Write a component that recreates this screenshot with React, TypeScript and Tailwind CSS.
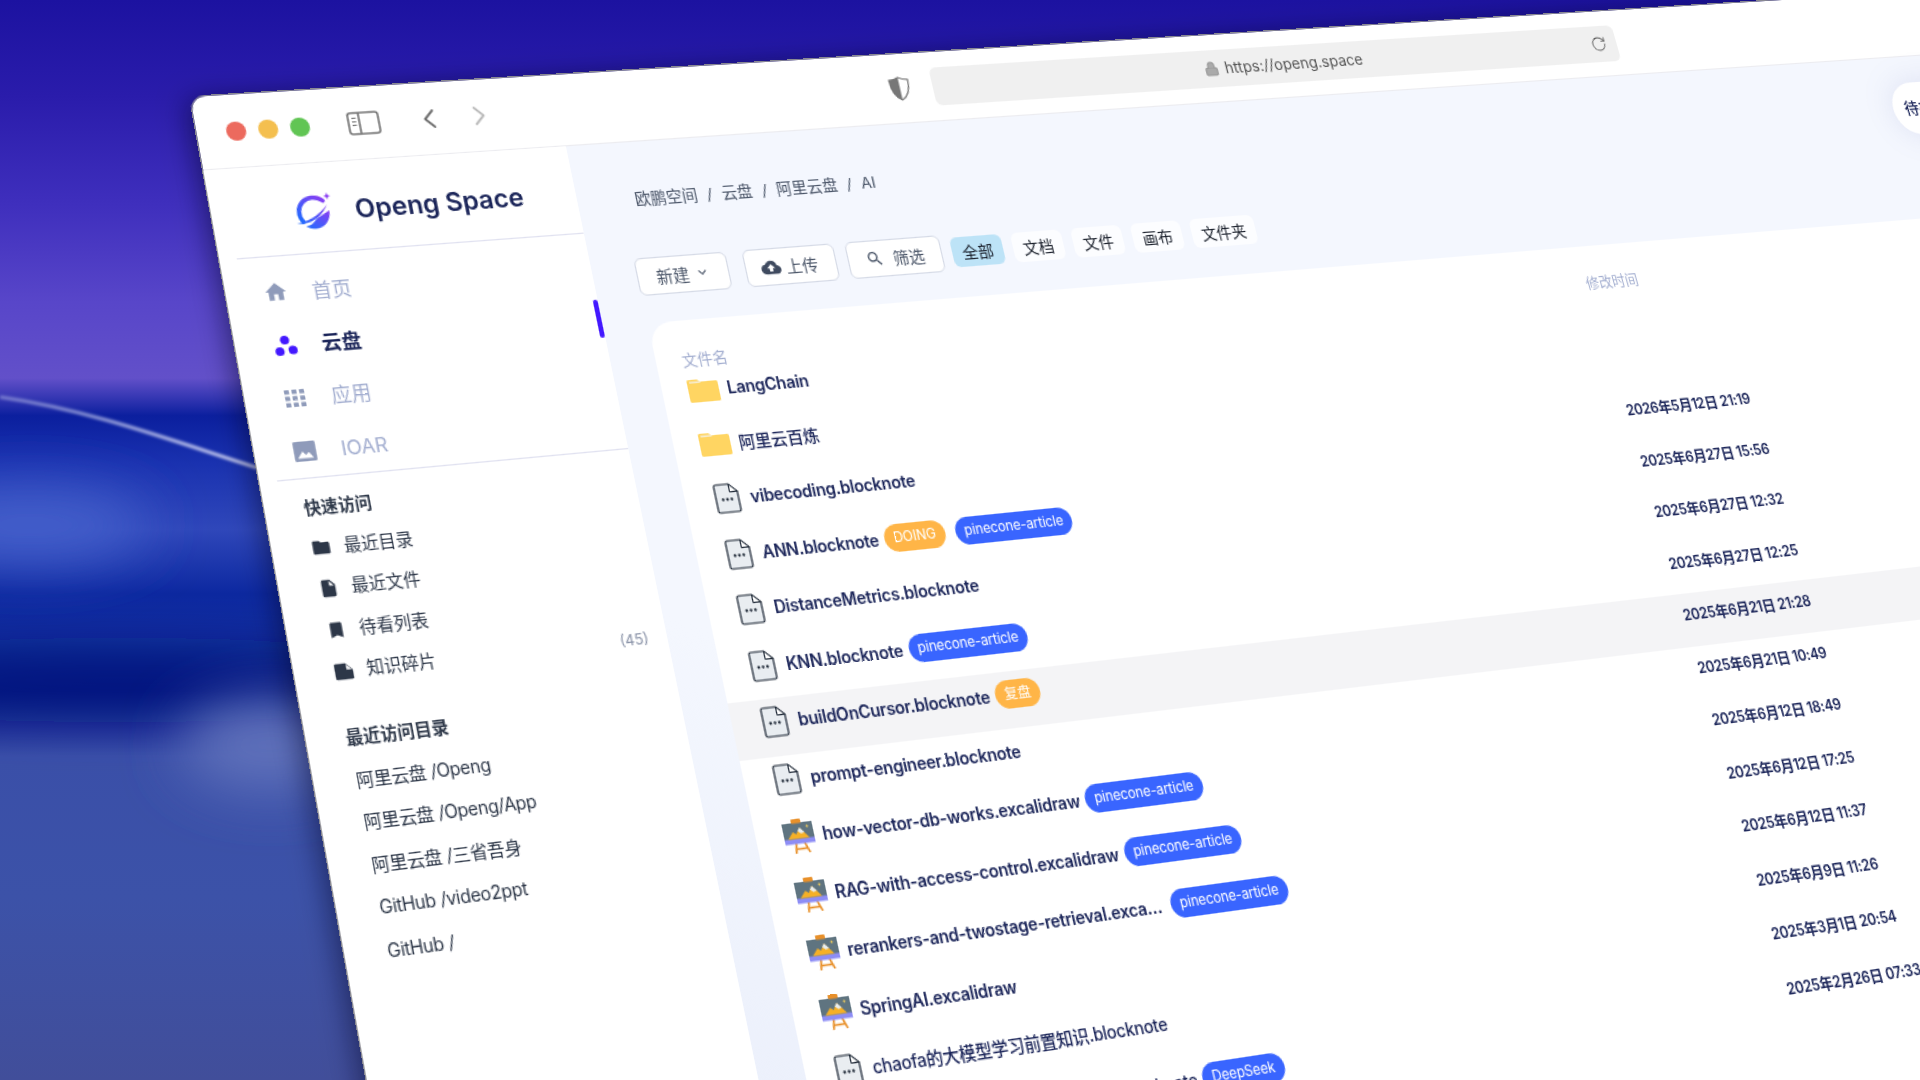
import { FC, ReactNode } from "react";
import { ChevronLeft, ChevronRight, Lock, RotateCw } from "lucide-react";
import {
  MdBookmark,
  MdCloudUpload,
  MdExpandMore,
  MdFolder,
  MdHome,
  MdInsertDriveFile,
  MdSearch,
} from "react-icons/md";

// the window is laid out flat, then pinned on four points measured in the screenshot
const getPerspective = () => {
  const S = 300;
  const R = 530;
  const [x0, y0] = [190, 97];
  const [x1, y1] = [551, 75];
  const [x2, y2] = [682, 710];
  const [x3, y3] = [308, 753];
  const dx1 = x1 - x2;
  const dx2 = x3 - x2;
  const sx = x0 - x1 + x2 - x3;
  const dy1 = y1 - y2;
  const dy2 = y3 - y2;
  const sy = y0 - y1 + y2 - y3;
  const den = dx1 * dy2 - dx2 * dy1;
  const g = (sx * dy2 - dx2 * sy) / den;
  const h = (dx1 * sy - sx * dy1) / den;
  const a = x1 - x0 + g * x1;
  const b = x3 - x0 + h * x3;
  const d = y1 - y0 + g * y1;
  const e = y3 - y0 + h * y3;
  return `matrix3d(${a / S},${d / S},0,${g / S},${b / R},${e / R},0,${h / R},0,0,1,0,${x0},${y0},0,1)`;
};

const Wallpaper: FC = () => (
  <svg className="absolute inset-0 w-full h-full" viewBox="0 0 1920 1080" preserveAspectRatio="none">
    <defs>
      <linearGradient id="wall" x1="0" y1="0" x2="0" y2="1">
        <stop offset="0" stopColor="#1c12a0" />
        <stop offset="0.09" stopColor="#2a1cab" />
        <stop offset="0.19" stopColor="#3f2fbd" />
        <stop offset="0.28" stopColor="#5846c9" />
        <stop offset="0.35" stopColor="#6250c9" />
        <stop offset="0.385" stopColor="#0b1f9e" />
        <stop offset="0.43" stopColor="#1a32b0" />
        <stop offset="0.49" stopColor="#2f47ba" />
        <stop offset="0.55" stopColor="#0c28a0" />
        <stop offset="0.59" stopColor="#12309f" />
        <stop offset="0.64" stopColor="#07198a" />
        <stop offset="0.7" stopColor="#3a4fa8" />
        <stop offset="0.83" stopColor="#3c52a8" />
        <stop offset="1" stopColor="#414e9a" />
      </linearGradient>
      <linearGradient id="streak" x1="0" y1="0" x2="1" y2="0">
        <stop offset="0" stopColor="#c6cbf0" stopOpacity="0.45" />
        <stop offset="1" stopColor="#d0d4f4" />
      </linearGradient>
      <filter id="soft" x="-100%" y="-200%" width="300%" height="500%">
        <feGaussianBlur stdDeviation="28" />
      </filter>
      <filter id="thin" x="-5%" y="-50%" width="110%" height="200%">
        <feGaussianBlur stdDeviation="1.4" />
      </filter>
    </defs>
    <rect width="1920" height="1080" fill="url(#wall)" />
    <ellipse cx="30" cy="525" rx="120" ry="36" fill="#4460cc" filter="url(#soft)" />
    <ellipse cx="120" cy="680" rx="300" ry="24" fill="#04127a" filter="url(#soft)" />
    <ellipse cx="270" cy="745" rx="90" ry="45" fill="#6072bb" filter="url(#soft)" />
    <path d="M0 397C90 410 170 440 258 468" stroke="url(#streak)" strokeWidth="3.5" fill="none" filter="url(#thin)" />
  </svg>
);

const Logo: FC = () => (
  <svg width="34" height="34" viewBox="0 0 34 34" fill="none">
    <defs>
      <linearGradient id="logo" x1="0" y1="1" x2="1" y2="0">
        <stop offset="0" stopColor="#1d6dff" />
        <stop offset="1" stopColor="#8a3df2" />
      </linearGradient>
    </defs>
    <path d="M25 7.5A12.5 12.5 0 0 0 6.5 24" stroke="url(#logo)" strokeWidth="3.6" strokeLinecap="round" />
    <path d="M1 25C8 25 20 20 28 11C23 20 12 28 1 25Z" fill="url(#logo)" />
    <path d="M18 22L29 16C29 24 23 31 15 30.5C12 30.3 10 29.5 8 28C12 28 15 25 18 22Z" fill="url(#logo)" />
    <path d="M29 1L29.8 3.2L32 4L29.8 4.8L29 7L28.2 4.8L26 4L28.2 3.2Z" fill="#8a3df2" />
  </svg>
);

const DotsIcon: FC = () => (
  <svg width="20" height="20" viewBox="0 0 20 20" fill="#4318ff">
    <circle cx="10" cy="5.5" r="3.6" />
    <circle cx="4.8" cy="14.5" r="3.6" />
    <circle cx="15.4" cy="14" r="3.6" />
  </svg>
);

const GridIcon: FC = () => (
  <svg width="16" height="16" viewBox="0 0 18 18" fill="#8f9bba">
    <rect x="0" y="1" width="4.4" height="4.2" rx=".6" />
    <rect x="6.8" y="1" width="4.4" height="4.2" rx=".6" />
    <rect x="13.6" y="1" width="4.4" height="4.2" rx=".6" />
    <rect x="0" y="6.9" width="4.4" height="4.2" rx=".6" />
    <rect x="6.8" y="6.9" width="4.4" height="4.2" rx=".6" />
    <rect x="13.6" y="6.9" width="4.4" height="4.2" rx=".6" />
    <rect x="0" y="12.8" width="4.4" height="4.2" rx=".6" />
    <rect x="6.8" y="12.8" width="4.4" height="4.2" rx=".6" />
    <rect x="13.6" y="12.8" width="4.4" height="4.2" rx=".6" />
  </svg>
);

const PhotoIcon: FC = () => (
  <svg width="18" height="16" viewBox="0 0 21 19">
    <rect x="0" y="0" width="21" height="19" rx="1.5" fill="#8f9bba" />
    <path d="M3 16L8 9.5L11 13L14 10.5L18 16Z" fill="#fff" />
  </svg>
);

const SnippetIcon: FC = () => (
  <svg width="18" height="16" viewBox="0 0 18 16">
    <path d="M1 2.5C1 1.7 1.7 1 2.5 1H11L17 7V13.5C17 14.3 16.3 15 15.5 15H2.5C1.7 15 1 14.3 1 13.5Z" fill="#2d3748" />
    <path d="M11.5 2L16 6.5H11.5Z" fill="#fff" />
  </svg>
);

const SidebarIcon: FC = () => (
  <svg width="27" height="20" viewBox="0 0 27 20" fill="none" stroke="#777" strokeWidth="1.6">
    <rect x="1" y="1" width="25" height="18" rx="2.5" />
    <path d="M10 1V19" />
    <path d="M4 5.5H7.5M4 8.5H7.5M4 11.5H7.5" strokeWidth="1.2" />
  </svg>
);

const ShieldIcon: FC = () => (
  <svg width="19" height="22" viewBox="0 0 19 22">
    <path d="M9.5 1C6.5 2.6 4 3 1 3.2C1 12 3.4 18 9.5 21C15.6 18 18 12 18 3.2C15 3 12.5 2.6 9.5 1Z" fill="#fff" stroke="#777" strokeWidth="1.2" />
    <path d="M9.5 1C6.5 2.6 4 3 1 3.2C1 12 3.4 18 9.5 21Z" fill="#777" />
  </svg>
);

const FolderIcon: FC = () => (
  <svg width="26" height="20" viewBox="0 0 26 20">
    <path d="M0 2.5C0 1.5 .8 1 1.5 1H9L11 3H24.5C25.4 3 26 3.7 26 4.5V18.5C26 19.4 25.4 20 24.5 20H1.5C.7 20 0 19.4 0 18.5Z" fill="#ffd562" />
    <path d="M2 2.5H10.5L12 4H2Z" fill="#f6ecd0" />
  </svg>
);

const DocIcon: FC = () => (
  <svg width="21" height="25" viewBox="0 0 21 25">
    <path d="M2.5 1H13.5L20 7.5V22.5C20 23.3 19.3 24 18.5 24H2.5C1.7 24 1 23.3 1 22.5V2.5C1 1.7 1.7 1 2.5 1Z" fill="#e9edf1" stroke="#1f2937" strokeWidth="1.2" />
    <path d="M13.5 1V7.5H20Z" fill="#fff" stroke="#1f2937" strokeWidth="1" />
    <circle cx="6.8" cy="13.5" r="1.15" fill="#1f2937" />
    <circle cx="10.5" cy="13.5" r="1.15" fill="#1f2937" />
    <circle cx="14.2" cy="13.5" r="1.15" fill="#1f2937" />
  </svg>
);

const EaselIcon: FC = () => (
  <svg width="25" height="27" viewBox="0 0 25 27">
    <path d="M9 19L7.5 27M16 19L19 27M8 23.5H18" stroke="#e8902a" strokeWidth="1.6" fill="none" />
    <rect x="0" y="3" width="25" height="16" fill="#5f7480" />
    <path d="M0 19.5V15.5H25V19.5Z" fill="#8d8df5" />
    <path d="M3 15.5L8 10L10.5 12L14 7L21 15.5Z" fill="#f5b027" />
    <path d="M12 9.5L14 7L17.5 11L14.5 11.8Z" fill="#e9eef2" />
    <rect x="8" y="0" width="8" height="3.5" rx="1" fill="#e8902a" />
    <circle cx="20.5" cy="6.5" r=".9" fill="#f8d25a" />
  </svg>
);

const Pill: FC<{ color: string; children: ReactNode }> = ({ color, children }) => (
  <span className={`flex items-center h-[23px] px-[8px] rounded-full text-[11.5px] tracking-[-0.1px] text-white whitespace-nowrap ${color}`}>
    {children}
  </span>
);

const blue = "bg-[#3965ff]";
const orange = "bg-[#ffb547]";

type Row = {
  name: string;
  icon: "folder" | "doc" | "easel";
  date?: string;
  tags?: [string, string][];
  active?: boolean;
};

const rows: Row[] = [
  { name: "LangChain", icon: "folder" },
  { name: "阿里云百炼", icon: "folder" },
  { name: "vibecoding.blocknote", icon: "doc", date: "2026年5月12日 21:19" },
  { name: "ANN.blocknote", icon: "doc", date: "2025年6月27日 15:56", tags: [["DOING", orange], ["pinecone-article", blue]] },
  { name: "DistanceMetrics.blocknote", icon: "doc", date: "2025年6月27日 12:32" },
  { name: "KNN.blocknote", icon: "doc", date: "2025年6月27日 12:25", tags: [["pinecone-article", blue]] },
  { name: "buildOnCursor.blocknote", icon: "doc", date: "2025年6月21日 21:28", tags: [["复盘", orange]], active: true },
  { name: "prompt-engineer.blocknote", icon: "doc", date: "2025年6月21日 10:49" },
  { name: "how-vector-db-works.excalidraw", icon: "easel", date: "2025年6月12日 18:49", tags: [["pinecone-article", blue]] },
  { name: "RAG-with-access-control.excalidraw", icon: "easel", date: "2025年6月12日 17:25", tags: [["pinecone-article", blue]] },
  { name: "rerankers-and-twostage-retrieval.excalidraw", icon: "easel", date: "2025年6月12日 11:37", tags: [["pinecone-article", blue]] },
  { name: "SpringAI.excalidraw", icon: "easel", date: "2025年6月9日 11:26" },
  { name: "chaofa的大模型学习前置知识.blocknote", icon: "doc", date: "2025年3月1日 20:54" },
  { name: "DeepSeek-R1技术报告论文解读.blocknote", icon: "doc", date: "2025年2月26日 07:33", tags: [["DeepSeek", blue]] },
];

const NavItem: FC<{ icon: ReactNode; label: string; active?: boolean }> = ({ icon, label, active }) => (
  <div className={`relative flex items-center h-[43px] pl-[30px] text-[16px] ${active ? "text-[#1b2559] font-semibold" : "text-[#a3aed0]"}`}>
    <span className="flex justify-center w-[20px] mr-[19px]">{icon}</span>
    {label}
    {active && <span className="absolute right-0 top-[5px] h-[32px] w-[4px] rounded-full bg-[#4318ff]" />}
  </div>
);

const QuickItem: FC<{ icon: ReactNode; label: string; count?: string }> = ({ icon, label, count }) => (
  <div className="flex items-center h-[32.5px] pl-[31px] pr-[15px] text-[13.75px] text-[#2d3748]">
    <span className="flex justify-center w-[16px] mr-[10px]">{icon}</span>
    {label}
    {count && <span className="ml-auto text-[12px] text-[#8a93a8]">{count}</span>}
  </div>
);

const Sidebar: FC = () => (
  <aside className="relative z-10 w-[300px] shrink-0 bg-white">
    <div className="ml-[14px] h-[75px] border-b border-[#e0e1f0] flex items-center pl-[52px] pt-[7px]">
      <Logo />
      <span className="ml-[16px] text-[21.5px] font-semibold text-[#1b2559]">Openg Space</span>
    </div>
    <nav className="pt-[8px]">
      <NavItem icon={<MdHome size={22} color="#8f9bba" className="-mt-[2px]" />} label="首页" />
      <NavItem icon={<DotsIcon />} label="云盘" active />
      <NavItem icon={<GridIcon />} label="应用" />
      <NavItem icon={<PhotoIcon />} label="IOAR" />
    </nav>
    <div className="ml-[14px] border-t border-[#e0e1f0]" />
    <div className="h-8 mt-[7px] flex items-center pl-[31px] text-[13.5px] font-semibold text-[#2d3748]">快速访问</div>
    <QuickItem icon={<MdFolder size={18} color="#2d3748" />} label="最近目录" />
    <QuickItem icon={<MdInsertDriveFile size={17} color="#2d3748" />} label="最近文件" />
    <QuickItem icon={<MdBookmark size={17} color="#2d3748" />} label="待看列表" />
    <QuickItem icon={<SnippetIcon />} label="知识碎片" count="(45)" />
    <div className="h-8 mt-[19px] flex items-center pl-[31px] text-[13.5px] font-semibold text-[#2d3748]">最近访问目录</div>
    {["阿里云盘 /Openg", "阿里云盘 /Openg/App", "阿里云盘 /三省吾身", "GitHub /video2ppt", "GitHub /"].map((item) => (
      <div key={item} className="flex items-center h-[32.5px] pl-[33px] text-[14px] tracking-[-0.3px] text-[#2d3748]">
        {item}
      </div>
    ))}
  </aside>
);

const Toolbar: FC = () => (
  <div className="flex items-center h-[32px] mt-[40px] pl-[37px] text-[14px]">
    <button className="flex items-center justify-center w-[79px] h-[32px] rounded-[6px] bg-white border border-[#d5dae6] text-[#4a5568]">
      新建
      <MdExpandMore size={14} className="ml-[4px]" />
    </button>
    <button className="flex items-center justify-center w-[80px] h-[32px] ml-[14px] pr-[3px] rounded-[6px] bg-white border border-[#d5dae6] text-[#4a5568]">
      <MdCloudUpload size={17} className="mr-[5px] text-[#3f4a5f]" />
      上传
    </button>
    <button className="flex items-center justify-center w-[84px] h-[32px] ml-[10px] rounded-[6px] bg-white border border-[#d5dae6] text-[#4a5568]">
      <MdSearch size={16} className="mr-[8px]" />
      筛选
    </button>
    <div className="flex gap-[9px] ml-[9px] text-[#1a202c]">
      <span className="flex items-center h-[26px] px-[9px] rounded-[6px] bg-[#bde3f7]">全部</span>
      <span className="flex items-center h-[26px] px-[9px] rounded-[6px] bg-white/70">文档</span>
      <span className="flex items-center h-[26px] px-[9px] rounded-[6px] bg-white/70">文件</span>
      <span className="flex items-center h-[26px] px-[9px] rounded-[6px] bg-white/70">画布</span>
      <span className="flex items-center h-[26px] px-[9px] rounded-[6px] bg-white/70">文件夹</span>
    </div>
  </div>
);

const FileRow: FC<{ row: Row }> = ({ row }) => (
  <div className={`flex items-center h-[45.5px] pb-[8px] pl-[22px] ${row.active ? "bg-[#f4f4f6]" : ""}`}>
    <span className="flex justify-center w-[26px] mr-[7px]">
      {row.icon === "folder" && <FolderIcon />}
      {row.icon === "doc" && <DocIcon />}
      {row.icon === "easel" && <EaselIcon />}
    </span>
    <div
      className={`flex items-center w-[806px] text-[14px] tracking-[-0.25px] text-[#1b2559] ${
        /[\u4e00-\u9fff]/.test(row.name) ? "font-medium" : "font-semibold"
      }`}
    >
      <span className="max-w-[272px] truncate">{row.name}</span>
      {row.tags && (
        <span className="flex gap-[9px] ml-[5px] font-normal tracking-normal">
          {row.tags.map(([tag, color]) => (
            <Pill key={tag} color={color}>
              {tag}
            </Pill>
          ))}
        </span>
      )}
    </div>
    <span className="text-[13px] font-semibold tracking-[-0.3px] text-[#1b2559] whitespace-nowrap">{row.date}</span>
  </div>
);

const Main: FC = () => (
  <main className="flex-1 min-w-0 bg-[linear-gradient(25deg,#e8edfa_0%,#f4f7fe_35%)]">
    <div className="flex items-center h-[20px] mt-[39px] pl-[49px] text-[13.5px] text-[#4a5568]">
      欧鹏空间<span className="mx-[8px]">/</span>云盘<span className="mx-[8px]">/</span>阿里云盘
      <span className="mx-[8px]">/</span>AI
    </div>
    <Toolbar />
    <section className="ml-[38px] mt-[23px] h-[800px] pt-[25px] rounded-tl-[20px] bg-white">
      <div className="flex h-[16px] pl-[22px] -mb-[1px] text-[13px] leading-[16px] text-[#a3aed0]">
        <span className="w-[834px]">文件名</span>
        <span>修改时间</span>
      </div>
      {rows.map((row) => (
        <FileRow key={row.name} row={row} />
      ))}
    </section>
  </main>
);

export default function App() {
  return (
    <div className="relative w-screen h-screen overflow-hidden bg-[#1c12a0] [font-family:Inter,'Noto_Sans_CJK_SC',sans-serif]">
      <Wallpaper />
      <div
        className="absolute left-0 top-0 w-[1720px] h-[1040px] origin-top-left rounded-[12px] overflow-hidden bg-white shadow-[-4px_2px_22px_rgba(5,5,40,0.55)] outline outline-[#8a8a92]"
        style={{ transform: getPerspective() }}
      >
        <header className="flex items-center h-[61px] pl-[24px]">
          <span className="w-[16px] h-[16px] rounded-full bg-[#ec6a5e]" />
          <span className="w-[16px] h-[16px] ml-[10px] rounded-full bg-[#f4bf4f]" />
          <span className="w-[16px] h-[16px] ml-[10px] rounded-full bg-[#61c554]" />
          <span className="ml-[31px] flex">
            <SidebarIcon />
          </span>
          <ChevronLeft size={28} strokeWidth={1.6} className="ml-[27px] text-[#6e6e6e]" />
          <ChevronRight size={28} strokeWidth={1.6} className="ml-[14px] text-[#bcbcbc]" />
          <span className="ml-[344px] flex">
            <ShieldIcon />
          </span>
          <div className="relative flex items-center justify-center w-[661px] h-[34px] ml-[20px] pr-[2px] rounded-[6px] bg-[#f0f0f0] text-[14px] text-[#555]">
            <Lock size={14} className="mr-[6px] text-[#999] fill-[#aaa]" />
            https://openg.space
            <RotateCw size={16} strokeWidth={1.3} className="absolute right-[10px] text-[#555]" />
          </div>
        </header>
        <div className="flex border-t border-[#ececf0]">
          <Sidebar />
          <Main />
        </div>
        <div className="absolute left-[1556px] top-[87px] flex items-center w-[130px] h-[50px] pl-[12px] rounded-full bg-white text-[15px] font-medium text-[#1b2559] shadow-[0_0_30px_rgba(120,130,190,0.18)]">
          待办事项
        </div>
      </div>
    </div>
  );
}
